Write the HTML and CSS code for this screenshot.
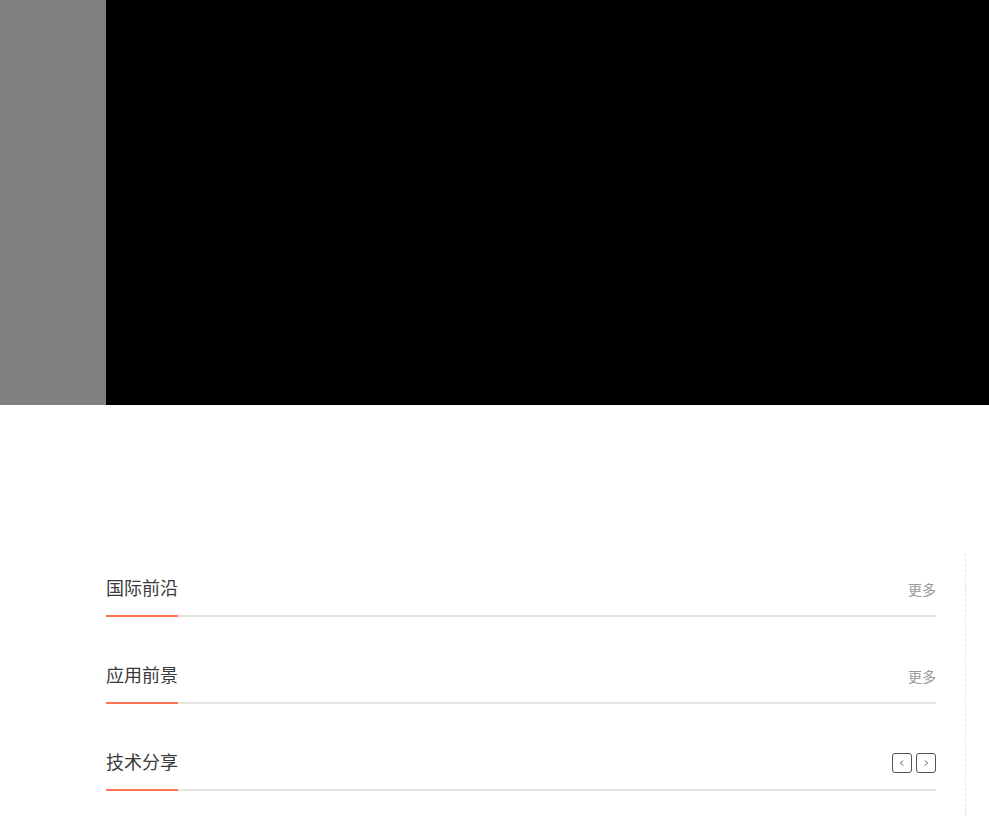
FILE: index.html
```html
<!DOCTYPE html>
<html lang="zh-CN">
<head>
<meta charset="utf-8">
<title>首页</title>
<link rel="stylesheet" href="styles.css">
</head>
<body>
<div class="hero">
  <div class="hero-side"></div>
  <div class="hero-main"></div>
</div>
<div class="content">
  <section class="block">
    <div class="block-head">
      <h2 class="block-title">国际前沿</h2>
      <a class="more" href="#">更多</a>
    </div>
    <div class="bar"><span class="bar-active"></span></div>
  </section>
  <section class="block">
    <div class="block-head">
      <h2 class="block-title">应用前景</h2>
      <a class="more" href="#">更多</a>
    </div>
    <div class="bar"><span class="bar-active"></span></div>
  </section>
  <section class="block">
    <div class="block-head">
      <h2 class="block-title">技术分享</h2>
      <div class="pager">
        <button class="pager-btn" aria-label="上一页"><svg width="8" height="8" viewBox="0 0 8 8"><path d="M5 1.5 L2.5 4 L5 6.5" fill="none" stroke="#555" stroke-width="1"/></svg></button>
        <button class="pager-btn" aria-label="下一页"><svg width="8" height="8" viewBox="0 0 8 8"><path d="M3 1.5 L5.5 4 L3 6.5" fill="none" stroke="#555" stroke-width="1"/></svg></button>
      </div>
    </div>
    <div class="bar"><span class="bar-active"></span></div>
  </section>
</div>
</body>
</html>
```
FILE: styles.css
```css
html, body {
  margin: 0;
  padding: 0;
  background: #fff;
  font-family: "Noto Sans CJK SC", "Noto Sans", sans-serif;
  overflow: hidden;
}

.hero {
  display: flex;
  height: 405px;
}

.hero-side {
  width: 106px;
  background: #808080;
}

.hero-main {
  flex: 1;
  background: #000;
}

.content {
  margin-top: 149px;
  margin-left: 106px;
  width: 830px;
  padding: 22px 29px 60px 0;
  border-right: 1px dashed #e3e3e3;
}

.block + .block {
  margin-top: 46px;
}

.block-head {
  display: flex;
  align-items: center;
  justify-content: space-between;
  height: 24px;
  margin-bottom: 15px;
}

.block-title {
  margin: -2px 0 0;
  font-size: 18px;
  font-weight: normal;
  line-height: 24px;
  color: #3a3a3a;
}

.more {
  font-size: 14px;
  color: #999;
  text-decoration: none;
  line-height: 20px;
  margin-top: 2px;
}

.bar {
  height: 2px;
  background: #e6e5dd;
}

.bar-active {
  display: block;
  width: 72px;
  height: 2px;
  background: #ff7256;
}

.pager {
  display: flex;
  gap: 4px;
  margin-top: 1px;
}

.pager-btn {
  box-sizing: border-box;
  width: 20px;
  height: 20px;
  padding: 0;
  border: 1px solid #555;
  border-radius: 3px;
  background: #fff;
  display: flex;
  align-items: center;
  justify-content: center;
}
```
